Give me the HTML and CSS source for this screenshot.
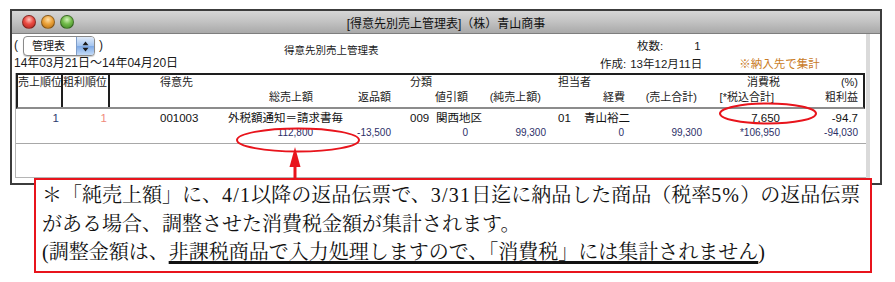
FILE: index.html
```html
<!DOCTYPE html>
<html lang="ja">
<head>
    <meta charset="UTF-8">
    <meta name="viewport" content="width=device-width, initial-scale=1.0">
    <title>得意先別売上管理表</title>
    <link rel="stylesheet" href="styles.css">
</head>
<body>
<div class="page">
    <div class="window">
        <div class="titlebar">
            <div class="lights">
                <span class="light red"></span>
                <span class="light orange"></span>
                <span class="light green"></span>
            </div>
            <div class="title">[得意先別売上管理表]（株）青山商事</div>
            <div></div>
        </div>

        <div class="win-body">
            <div class="main">
                <div class="toolbar">
                    <div class="tb-left">
                        <div class="tb-select">
                            <span>(</span>
                            <span class="popup">
                                <span class="popup-label">管理表</span>
                                <span class="popup-btn">
                                    <svg width="7" height="11" viewBox="0 0 7 11"><path d="M3.5 0.5 L6.5 4.2 H0.5 Z M3.5 10.5 L6.5 6.8 H0.5 Z" fill="#1a1a1a"/></svg>
                                </span>
                            </span>
                            <span class="paren-close">)</span>
                        </div>
                        <div class="period">14年03月21日～14年04月20日</div>
                    </div>
                    <div class="report-name">得意先別売上管理表</div>
                    <div class="tb-right">
                        <div class="count">
                            <span class="count-label">枚数:</span>
                            <span class="count-val">1</span>
                        </div>
                        <div class="created">
                            <span>作成:</span>
                            <span class="created-date">13年12月11日</span>
                            <span class="agg-note">※納入先で集計</span>
                        </div>
                    </div>
                </div>

                <div class="list">
                    <div class="list-head">
                        <div class="rank rank-sales">売上順位</div>
                        <div class="rank rank-profit">粗利順位</div>
                        <div class="head-lines">
                            <div class="hl">
                                <span class="h-cust">得意先</span>
                                <span class="h-cat">分類</span>
                                <span class="h-staff">担当者</span>
                                <span class="h-tax">消費税</span>
                                <span class="h-pct">(%)</span>
                            </div>
                            <div class="hl">
                                <span class="r" style="width:203px">総売上額</span>
                                <span class="r" style="width:78px">返品額</span>
                                <span class="r" style="width:77px">値引額</span>
                                <span class="r" style="width:73px">(純売上額)</span>
                                <span class="r" style="width:84px">経費</span>
                                <span class="r" style="width:72px">(売上合計)</span>
                                <span class="r" style="width:77px">[*税込合計]</span>
                                <span class="r" style="width:84px">粗利益</span>
                            </div>
                        </div>
                    </div>

                    <div class="record">
                        <div class="rl rl-main">
                            <span class="r rank-val">1</span>
                            <span class="r rank-val profit">1</span>
                            <span class="d-code">001003</span>
                            <span class="d-bill">外税額通知＝請求書毎</span>
                            <span class="d-cat-code">009</span>
                            <span class="d-cat-name">関西地区</span>
                            <span class="d-staff-code">01</span>
                            <span class="d-staff-name">青山裕二</span>
                            <span class="r d-tax">7,650</span>
                            <span class="r d-pct">-94.7</span>
                        </div>
                        <div class="rl rl-sub">
                            <span class="r" style="width:297px">112,800</span>
                            <span class="r" style="width:78px">-13,500</span>
                            <span class="r" style="width:77px">0</span>
                            <span class="r" style="width:78px">99,300</span>
                            <span class="r" style="width:78px">0</span>
                            <span class="r" style="width:78px">99,300</span>
                            <span class="r" style="width:78px">*106,950</span>
                            <span class="r" style="width:78px">-94,030</span>
                        </div>
                    </div>
                </div>
            </div>
            <div class="scroll"></div>
        </div>
    </div>

    <div class="note">
        <div>＊「純売上額」に、<span class="num">4/1</span>以降の返品伝票で、<span class="num">3/31</span>日迄に納品した商品（税率<span class="num">5%</span>）の返品伝票</div>
        <div>がある場合、調整させた消費税金額が集計されます。</div>
        <div>(調整金額は、<span class="underline">非課税商品で入力処理しますので、「消費税」には集計されません</span>)</div>
    </div>

    <!-- red marks drawn over the screenshot -->
    <svg class="marks" width="895" height="282" viewBox="0 0 895 282">
        <ellipse cx="298" cy="140" rx="61" ry="11.5" fill="none" stroke="#e8141c" stroke-width="2"/>
        <ellipse cx="768" cy="113.5" rx="48" ry="10" fill="none" stroke="#e8141c" stroke-width="2"/>
        <line x1="295" y1="165" x2="295" y2="180" stroke="#e8141c" stroke-width="3"/>
        <polygon points="295,147 289.5,167 300.5,167" fill="#e8141c"/>
    </svg>
</div>
</body>
</html>
```

FILE: styles.css
```css
body {
    margin: 0;
    background: #fff;
    font-family: "Liberation Sans", "Noto Sans CJK JP", sans-serif;
    color: #1a1a1a;
}
.page {
    position: relative;
    width: 895px;
    height: 282px;
    padding: 9px 0 0 10px;
    box-sizing: border-box;
}

/* window */
.window {
    width: 872px;
    height: 176px;
    border: 2px solid #3c3c3c;
    box-sizing: border-box;
    display: flex;
    flex-direction: column;
    background: #fff;
}
.titlebar {
    height: 22px;
    flex: none;
    border-bottom: 1px solid #7e7e7e;
    background: linear-gradient(#d6d6d6, #c4c4c4 45%, #a9a9a9);
    display: grid;
    grid-template-columns: 90px 1fr 90px;
    align-items: center;
}
.lights {
    display: flex;
    gap: 5px;
    padding-left: 10px;
}
.light {
    width: 14px;
    height: 14px;
    border-radius: 50%;
    box-sizing: border-box;
    border: 1px solid rgba(0, 0, 0, 0.35);
}
.light.red {
    background: radial-gradient(circle at 50% 30%, #ffc4bc 0, #ea4a41 45%, #a8231c 100%);
}
.light.orange {
    background: radial-gradient(circle at 50% 30%, #ffe0a8 0, #eba23a 45%, #b06a10 100%);
}
.light.green {
    background: radial-gradient(circle at 50% 30%, #d2f3b8 0, #72bb4a 45%, #3b8222 100%);
}
.title {
    text-align: center;
    font-size: 12px;
    color: #111;
    white-space: nowrap;
}

.win-body {
    flex: 1;
    display: flex;
}
.main {
    flex: 1;
    display: flex;
    flex-direction: column;
}
.scroll {
    width: 14px;
    border-left: 4px solid #dadada;
    box-sizing: border-box;
}

/* toolbar */
.toolbar {
    height: 39px;
    flex: none;
    display: flex;
    font-size: 12px;
    white-space: nowrap;
}
.tb-left {
    width: 272px;
    padding-left: 2px;
    box-sizing: border-box;
}
.tb-select {
    height: 22px;
    display: flex;
    align-items: center;
}
.popup {
    display: flex;
    width: 72px;
    height: 20px;
    margin: 2px 0 0 5px;
    border: 1px solid #8a8a8a;
    border-radius: 4px;
    box-sizing: border-box;
    box-shadow: 0 1px 1px rgba(0, 0, 0, 0.2);
    background: #fff;
    overflow: hidden;
}
.popup-label {
    flex: 1;
    padding-left: 8px;
    font-size: 11px;
    line-height: 18px;
}
.popup-btn {
    width: 17px;
    display: flex;
    align-items: center;
    justify-content: center;
    border-left: 1px solid #7f9ec9;
    background: linear-gradient(#e0ebf9, #a6c6f0 48%, #7eaae6 52%, #c3daf7);
}
.paren-close {
    margin-left: 4px;
}
.period {
    margin-top: 1px;
    line-height: 13px;
}
.report-name {
    width: 316px;
    padding-top: 9px;
    line-height: 15px;
    font-size: 10.5px;
}
.tb-right {
    flex: 1;
    font-size: 11.5px;
}
.count {
    display: flex;
    padding-top: 5px;
    line-height: 14px;
}
.count-label {
    margin-left: 37px;
}
.count-val {
    margin-left: 31px;
}
.created {
    display: flex;
    margin-top: 4px;
    line-height: 14px;
}
.created-date {
    margin-left: 4px;
    width: 109px;
}
.agg-note {
    color: #c97b26;
}

/* list */
.list {
    flex: 1;
    margin: 0 0 5px 3px;
    border-left: 1px solid #b5b5b5;
    border-bottom: 1px solid #b5b5b5;
    white-space: nowrap;
}
.list-head {
    display: flex;
    height: 36px;
    margin-right: 1px;
    box-sizing: border-box;
    border: 2px solid #1e1e1e;
    border-bottom-color: #8c8c8c;
    font-size: 11px;
    color: #222;
}
.rank {
    box-sizing: border-box;
    border-right: 2px solid #1e1e1e;
    line-height: 15px;
}
.rank-sales {
    width: 45px;
}
.rank-profit {
    width: 47px;
}
.head-lines {
    flex: 1;
}
.hl {
    display: flex;
    height: 15px;
    line-height: 15px;
}
.r {
    text-align: right;
    flex: none;
}
.h-cust {
    margin-left: 50px;
    width: 250px;
}
.h-cat {
    width: 148px;
}
.h-staff {
    width: 100px;
}
.h-tax {
    width: 122px;
    text-align: right;
}
.h-pct {
    width: 78px;
    text-align: right;
}

.record {
    height: 35px;
    box-sizing: border-box;
    padding-top: 2px;
    border-bottom: 1px solid #a8a8a8;
}
.rl {
    display: flex;
    line-height: 14px;
}
.rl-main {
    font-size: 11.5px;
    color: #111;
}
.rl-sub {
    margin-top: 1px;
    font-size: 10px;
    color: #2c2f68;
}
.rank-val {
    width: 47px;
    padding-right: 4px;
    box-sizing: border-box;
    color: #2c3a6e;
}
.rank-val.profit {
    padding-right: 3px;
    color: #f08a7a;
}
.d-code {
    width: 118px;
    padding-left: 50px;
    box-sizing: border-box;
}
.d-bill {
    width: 182px;
}
.d-cat-code {
    width: 26px;
}
.d-cat-name {
    width: 122px;
}
.d-staff-code {
    width: 26px;
}
.d-staff-name {
    width: 100px;
}
.d-tax {
    width: 96px;
}
.d-pct {
    width: 78px;
}

/* annotation */
.note {
    position: relative;
    z-index: 1;
    margin: -7px 0 0 24px;
    width: 838px;
    height: 95px;
    box-sizing: border-box;
    border: 2px solid #e8141c;
    background: #fff;
    padding: 1px 0 0 6px;
    font-family: "Liberation Serif", "Noto Serif CJK JP", "Noto Sans CJK JP", serif;
    font-size: 20px;
    line-height: 28.5px;
    color: #111;
    white-space: nowrap;
}
.num {
    letter-spacing: 1.2px;
}
.underline {
    text-decoration: underline;
    text-decoration-thickness: 3px;
    text-underline-offset: 2px;
}
.marks {
    position: absolute;
    top: 0;
    left: 0;
    z-index: 2;
    pointer-events: none;
}
```
